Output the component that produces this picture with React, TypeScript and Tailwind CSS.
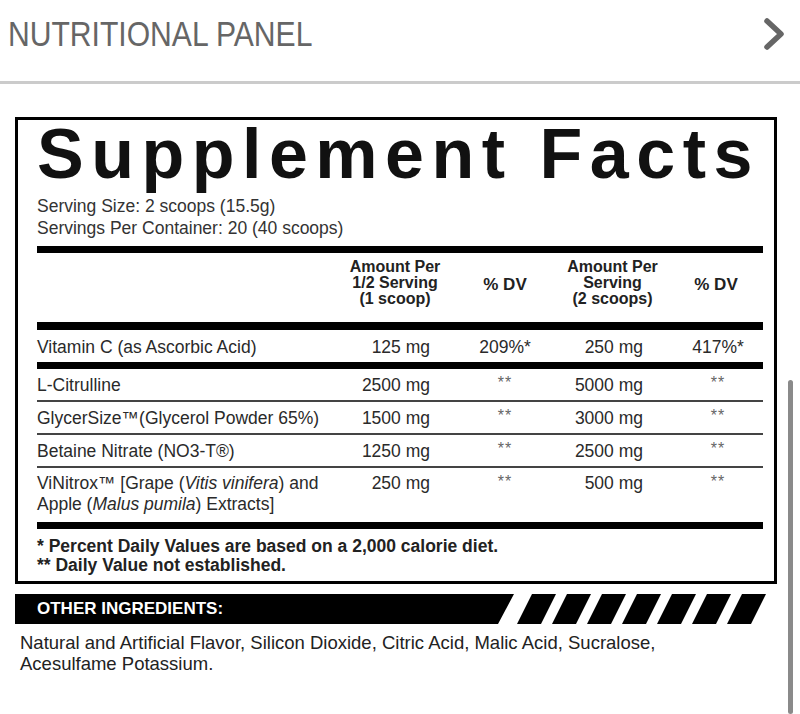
import React from "react"

const sans = "font-['Liberation_Sans',Arial,sans-serif]"

type Row = {
  name: React.ReactNode
  half: string
  halfDv: string
  full: string
  fullDv: string
  two?: boolean
}

const rows: Row[] = [
  { name: "L-Citrulline", half: "2500 mg", halfDv: "**", full: "5000 mg", fullDv: "**" },
  { name: "GlycerSize™(Glycerol Powder 65%)", half: "1500 mg", halfDv: "**", full: "3000 mg", fullDv: "**" },
  { name: "Betaine Nitrate (NO3-T®)", half: "1250 mg", halfDv: "**", full: "2500 mg", fullDv: "**" },
  {
    name: (
      <>
        ViNitrox™ [Grape (<i>Vitis vinifera</i>) and
        <br />
        Apple (<i>Malus pumila</i>) Extracts]
      </>
    ),
    half: "250 mg",
    halfDv: "**",
    full: "500 mg",
    fullDv: "**",
    two: true,
  },
]

const grid = "grid grid-cols-[303px_110px_110px_105px_98px]"

function Chevron() {
  return (
    <svg width="22" height="34" viewBox="0 0 22 34" className="mt-[1px]">
      <path
        d="M4 4 L18 17 L4 30"
        fill="none"
        stroke="#666"
        strokeWidth="5.5"
        strokeLinecap="round"
        strokeLinejoin="round"
      />
    </svg>
  )
}

function Stripes() {
  const xs = [0, 1, 2, 3, 4, 5, 6]
  return (
    <svg width="261" height="30" viewBox="0 0 261 30">
      {xs.map((i) => {
        const x = 18 + i * 35
        return <polygon key={i} points={`${x},0 ${x + 24},0 ${x + 9},30 ${x - 15},30`} fill="#000" />
      })}
    </svg>
  )
}

export default function App() {
  return (
    <div className="relative w-[800px] h-[714px] overflow-hidden bg-white">
      {/* top bar */}
      <div className="flex items-start justify-between h-[81px] pt-[16px] pl-[8px] pr-[15px]">
        <span
          className={`${sans} inline-block origin-left scale-x-[0.86] whitespace-nowrap text-[35px] leading-[35px] text-[#666]`}
        >
          NUTRITIONAL PANEL
        </span>
        <Chevron />
      </div>
      <div className="h-[3px] bg-[#cbcbcb]" />

      {/* label */}
      <div className="mt-[33px] ml-[15px] w-[762px] border-[3px] border-black pl-[19px] pr-[11px] pb-[6px]">
        <h1
          className={`${sans} whitespace-nowrap font-bold text-[70px] leading-[70px] tracking-[7.5px] text-[#111] -mt-[1px]`}
        >
          Supplement Facts
        </h1>
        <div className={`${sans} mt-[6px] text-[17.5px] leading-[22px] text-[#333]`}>
          <div>Serving Size: 2 scoops (15.5g)</div>
          <div>Servings Per Container: 20 (40 scoops)</div>
        </div>
        <div className="mt-[7px] h-[7px] bg-black" />

        {/* column heads */}
        <div className={`${grid} ${sans} font-bold text-[16px] leading-[16px] text-[#222] pt-[6px] pb-[15px]`}>
          <div />
          <div className="text-center">
            Amount Per
            <br />
            1/2 Serving
            <br />
            (1 scoop)
          </div>
          <div className="self-center text-center pt-[3px] text-[17px]">% DV</div>
          <div className="text-center">
            Amount Per
            <br />
            Serving
            <br />
            (2 scoops)
          </div>
          <div className="self-center text-center pl-1 pt-[3px] text-[17px]">% DV</div>
        </div>
        <div className="h-[8px] bg-black" />

        <div className={`${grid} ${sans} text-[17.5px] leading-[22px] text-[#2a2a2a] pt-[6px] pb-[4px]`}>
          <div>Vitamin C (as Ascorbic Acid)</div>
          <div className="text-right pr-5">125 mg</div>
          <div className="text-center">209%*</div>
          <div className="text-right pr-[22px]">250 mg</div>
          <div className="text-center pl-2">417%*</div>
        </div>
        <div className="h-[7px] bg-black" />

        {rows.map((r, i) => (
          <div
            key={i}
            className={`${grid} ${sans} text-[17.5px] text-[#2a2a2a] ${i > 0 ? "border-t-2 border-[#444]" : ""} ${
              r.two ? "leading-[21px] pt-[5px] pb-[7px]" : "leading-[22px] pt-[5px] pb-[4px]"
            }`}
          >
            <div>{r.name}</div>
            <div className="text-right pr-5">{r.half}</div>
            <div className="text-center text-[16px] leading-[18px] text-[#666] tracking-[1px]">{r.halfDv}</div>
            <div className="text-right pr-[22px]">{r.full}</div>
            <div className="text-center pl-2 text-[16px] leading-[18px] text-[#666] tracking-[1px]">{r.fullDv}</div>
          </div>
        ))}
        <div className="h-[7px] bg-black" />

        <div className={`${sans} font-bold text-[17.5px] leading-[19px] text-[#222] pt-[8px]`}>
          <div>* Percent Daily Values are based on a 2,000 calorie diet.</div>
          <div>** Daily Value not established.</div>
        </div>
      </div>

      {/* other ingredients banner */}
      <div className="mt-[10px] ml-[15px] flex h-[30px]">
        <div className="w-[499px] bg-black flex items-center pl-[22px] [clip-path:polygon(0_0,100%_0,calc(100%-16px)_100%,0_100%)]">
          <span className={`${sans} font-bold text-[17px] text-white`}>OTHER INGREDIENTS:</span>
        </div>
        <Stripes />
      </div>
      <p className={`${sans} mt-[8px] pl-[20px] whitespace-nowrap text-[18.5px] leading-[21px] text-[#222]`}>
        Natural and Artificial Flavor, Silicon Dioxide, Citric Acid, Malic Acid, Sucralose,
        <br />
        Acesulfame Potassium.
      </p>

      {/* scrollbar */}
      <div className="absolute right-[7px] top-[380px] bottom-0 w-[5px] rounded-full bg-[#8a8a8a]" />
    </div>
  )
}
